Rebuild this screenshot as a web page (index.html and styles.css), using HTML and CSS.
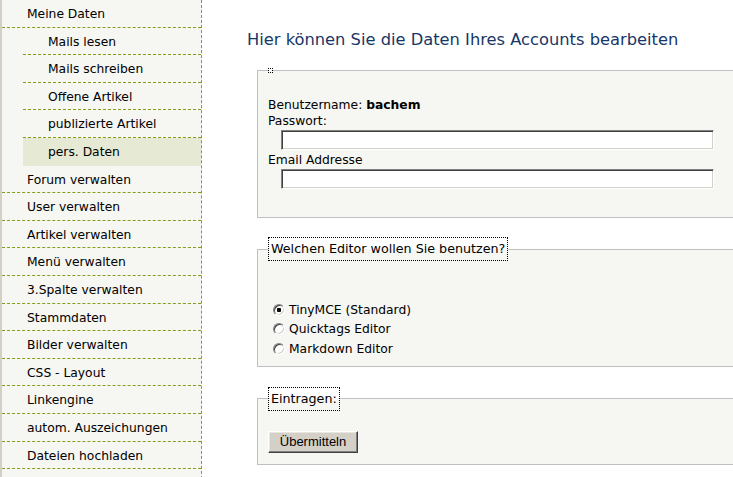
FILE: index.html
```html
<!DOCTYPE html>
<html lang="de">
<head>
<meta charset="utf-8">
<title>Account bearbeiten</title>
<link rel="stylesheet" href="styles.css">
</head>
<body>
<div class="page">
  <nav class="sidebar">
    <ul class="menu">
      <li class="item">
        <span class="row main-row">Meine Daten</span>
        <ul class="submenu">
          <li class="row sub-row">Mails lesen</li>
          <li class="row sub-row">Mails schreiben</li>
          <li class="row sub-row">Offene Artikel</li>
          <li class="row sub-row">publizierte Artikel</li>
          <li class="row sub-row active">pers. Daten</li>
        </ul>
      </li>
      <li class="row main-row">Forum verwalten</li>
      <li class="row main-row">User verwalten</li>
      <li class="row main-row">Artikel verwalten</li>
      <li class="row main-row">Menü verwalten</li>
      <li class="row main-row">3.Spalte verwalten</li>
      <li class="row main-row">Stammdaten</li>
      <li class="row main-row">Bilder verwalten</li>
      <li class="row main-row">CSS - Layout</li>
      <li class="row main-row">Linkengine</li>
      <li class="row main-row">autom. Auszeichungen</li>
      <li class="row main-row">Dateien hochladen</li>
      <li class="row main-row row-empty"></li>
    </ul>
  </nav>
  <main class="content">
    <h1 class="title">Hier können Sie die Daten Ihres Accounts bearbeiten</h1>
    <form class="form">
      <fieldset class="box box-account">
        <legend class="legend legend-empty"></legend>
        <div class="lines">
          <div class="line">Benutzername: <b>bachem</b></div>
          <div class="line">Passwort:</div>
        </div>
        <input class="field" type="password">
        <div class="line">Email Addresse</div>
        <input class="field" type="text">
      </fieldset>

      <fieldset class="box box-editor">
        <legend class="legend">Welchen Editor wollen Sie benutzen?</legend>
        <div class="radios">
          <label class="radio-row"><input class="radio" type="radio" name="editor" checked> TinyMCE (Standard)</label>
          <label class="radio-row"><input class="radio" type="radio" name="editor"> Quicktags Editor</label>
          <label class="radio-row"><input class="radio" type="radio" name="editor"> Markdown Editor</label>
        </div>
      </fieldset>

      <fieldset class="box box-submit">
        <legend class="legend">Eintragen:</legend>
        <button class="button" type="button">Übermitteln</button>
      </fieldset>
    </form>
  </main>
</div>
</body>
</html>
```

FILE: styles.css
```css
html, body {
  margin: 0;
  padding: 0;
  background: #ffffff;
  overflow: hidden;
  height: 100%;
}

body {
  font-family: "DejaVu Sans", Verdana, sans-serif;
  font-size: 12.3px;
  color: #000000;
}

.page {
  display: flex;
  align-items: flex-start;
  width: 1000px;
}

.sidebar {
  flex: none;
  width: 199px;
  background: #f6f6f2;
  border-left: 2px solid #d4d0c8;
  border-right: 1px dashed #80a01a;
}

.menu, .submenu {
  list-style: none;
  margin: 0;
  padding: 0;
}

.row {
  display: block;
  line-height: 28.6px;
  height: 26.6px;
  border-bottom: 1px dashed #80a01a;
  white-space: nowrap;
}

.row-empty {
  height: 40px;
  border-bottom: none;
}

.main-row {
  padding-left: 25px;
}

.submenu {
  margin-left: 21px;
}

.sub-row {
  padding-left: 25px;
}

.sub-row.active {
  background: #e6e9d3;
  border-bottom: none;
  height: 27.6px;
}

.content {
  flex: none;
  width: 700px;
  padding-left: 45px;
}

.title {
  margin: 30px 0 18px;
  font-size: 16.3px;
  line-height: 20px;
  font-weight: normal;
  color: #173767;
}

.form {
  margin: 0 0 0 10px;
}

.box {
  margin: 0;
  background: #f6f6f2;
  border: 1px solid #c0c0c0;
  padding: 0 10px;
  min-width: 0;
}

.legend {
  border: 1px dotted #000000;
  padding: 2px 2px;
  font-size: 12.7px;
  line-height: 18px;
  margin: 0;
}

.legend-empty {
  width: 3px;
  height: 3px;
  padding: 0;
  line-height: 0;
}

.box-account {
  padding-top: 24px;
  padding-bottom: 26px;
}

.line {
  line-height: 16px;
}

.field {
  display: block;
  box-sizing: border-box;
  width: 433px;
  height: 20px;
  margin: 1px 0 2px 13px;
  padding: 0;
  background: #ffffff;
  border: 1px solid;
  border-color: #808080 #ffffff #ffffff #808080;
  box-shadow: inset 1px 1px 0 #404040, inset -1px -1px 0 #d4d0c8;
  outline: none;
}

.box-editor {
  margin-top: 19px;
  padding-top: 39px;
  padding-bottom: 7px;
}

.radio-row {
  display: flex;
  align-items: center;
  height: 19.6px;
  gap: 4px;
}

.radio {
  appearance: none;
  -webkit-appearance: none;
  box-sizing: border-box;
  width: 12px;
  height: 12px;
  margin: 0 0 0 5px;
  border-radius: 50%;
  border: 1px solid;
  border-color: #808080 #ffffff #ffffff #808080;
  box-shadow: inset 1px 1px 0 #404040, inset -1px -1px 0 #d4d0c8;
  background: #ffffff;
}

.radio:checked {
  background: radial-gradient(circle, #000000 0 2px, #ffffff 2.5px);
}

.box-submit {
  margin-top: 20px;
  padding-top: 20px;
  padding-bottom: 11px;
}

.button {
  display: block;
  box-sizing: border-box;
  width: 90px;
  height: 22px;
  padding: 0;
  font-family: "Liberation Sans", Arial, sans-serif;
  font-size: 13px;
  color: #000000;
  background: #d4d0c8;
  border: 1px solid;
  border-color: #ffffff #404040 #404040 #ffffff;
  box-shadow: inset -1px -1px 0 #808080, inset 1px 1px 0 #e8e6e0;
}
```
